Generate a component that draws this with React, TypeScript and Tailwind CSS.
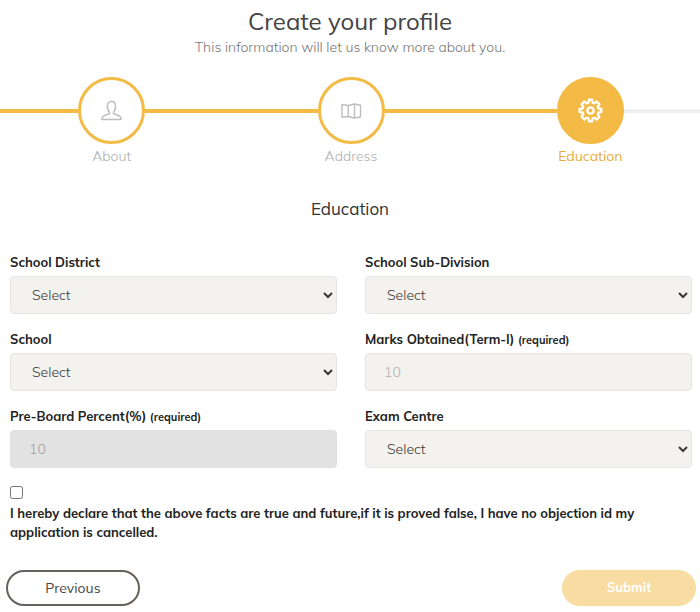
import React, { useState } from 'react';
import clsx from 'clsx';

type StepItem = {
    name: string;
    icon: React.ReactNode;
    active?: boolean;
    last?: boolean;
};

const UserIcon = () => (
    <svg width="21" height="21" viewBox="0 0 21 21" fill="none" stroke="currentColor" strokeWidth="1.5" strokeLinejoin="round">
        <path d="M8.5 12.2C7.2 11 6.4 9.2 6.4 6.6C6.4 3.2 7.8 1.2 10.5 1.2S14.6 3.2 14.6 6.6C14.6 9.2 13.8 11 12.5 12.2V13.6C14.6 14.7 20 15.2 20 18.2V19.5H1V18.2C1 15.2 6.4 14.7 8.5 13.6Z" />
    </svg>
);

const MapIcon = () => (
    <svg width="21" height="21" viewBox="0 0 21 21" fill="none" stroke="currentColor" strokeWidth="1.4" strokeLinejoin="round">
        <path d="M1 4.5L7.2 5.5L13.5 4L19.5 5.2V17L13.5 18L7.2 16.5L1 17.2Z" />
        <path d="M7.2 5.5V16.5M13.5 4V18" />
    </svg>
);

const SettingsIcon = () => (
    <svg width="25" height="25" viewBox="0 0 25 25" fill="none" stroke="currentColor" strokeWidth="2.3" strokeLinejoin="round">
        <path d="M10.9 1.6H14.1L14.5 4.6L16.3 5.3L18.7 3.5L21.5 6.3L19.7 8.7L20.4 10.5L23.4 10.9V14.1L20.4 14.5L19.7 16.3L21.5 18.7L18.7 21.5L16.3 19.7L14.5 20.4L14.1 23.4H10.9L10.5 20.4L8.7 19.7L6.3 21.5L3.5 18.7L5.3 16.3L4.6 14.5L1.6 14.1V10.9L4.6 10.5L5.3 8.7L3.5 6.3L6.3 3.5L8.7 5.3L10.5 4.6Z" />
        <circle cx="12.5" cy="12.5" r="3.2" />
    </svg>
);

const STEPS: StepItem[] = [
    { name: 'About', icon: <UserIcon /> },
    { name: 'Address', icon: <MapIcon /> },
    { name: 'Education', icon: <SettingsIcon />, active: true, last: true },
];

const Step: React.FC<StepItem> = ({ name, icon, active, last }) => (
    <li className="flex flex-col items-center">
        <div className="flex w-full items-center">
            <span className="h-1 flex-1 bg-[#f3bb45]" />
            <span
                className={clsx(
                    'flex size-[67px] items-center justify-center rounded-full border-3 border-[#f3bb45]',
                    active ? 'bg-[#f3bb45] text-white' : 'bg-white text-[#bdbdbd]'
                )}
            >
                {icon}
            </span>
            <span className={clsx('h-1 flex-1', last ? 'bg-[#f0f0f0]' : 'bg-[#f3bb45]')} />
        </div>
        <span className={clsx('leading-6', active ? 'text-sm text-[#e6ac3c]' : 'text-sm font-light text-[#b0b0b0]')}>{name}</span>
    </li>
);

const Label: React.FC<{ id: string; text: string; required?: boolean }> = ({ id, text, required }) => (
    <label htmlFor={id} className="h-6 text-[13px] leading-5 font-bold text-[#222222]">
        {text} {required && <small className="text-[11px]">(required)</small>}
    </label>
);

const SelectField: React.FC<{ id: string; label: string }> = ({ id, label }) => (
    <div className="flex flex-col">
        <Label id={id} text={label} />
        <select id={id} className="h-[38px] w-full rounded border border-[#e6e5e2] bg-[#f3f2ee] pl-[17px] text-sm font-light text-[#3a3835]">
            <option>Select</option>
        </select>
    </div>
);

const NumberField: React.FC<{ id: string; label: string; disabled?: boolean }> = ({ id, label, disabled }) => (
    <div className="flex flex-col">
        <Label id={id} text={label} required />
        <input
            id={id}
            type="text"
            placeholder="10"
            disabled={disabled}
            className="h-[38px] w-full rounded border border-[#e6e5e2] bg-[#f3f2ee] px-[18px] text-sm font-light placeholder:text-[#b0b0b0] disabled:border-[#e0e0e0] disabled:bg-[#e2e2e2] disabled:placeholder:text-[#a0a0a0]"
        />
    </div>
);

export default function App() {
    const [agreed, setAgreed] = useState(false);

    return (
        <main className="overflow-hidden bg-white font-['Muli','Mulish','Lato',sans-serif]">
            {/* Header */}
            <header className="pt-[3px] text-center">
                <h1 className="text-2xl leading-9 text-[#444444]">Create your profile</h1>
                <p className="text-sm leading-4 font-light text-[#777777]">This information will let us know more about you.</p>
            </header>

            {/* Wizard steps */}
            <ol className="-mr-2.5 -ml-2 grid grid-cols-3 pt-[22px]">
                {STEPS.map(step => (
                    <Step key={step.name} {...step} />
                ))}
            </ol>

            <form onSubmit={e => e.preventDefault()}>
                <h2 className="pt-[27px] text-center text-[17px] leading-7 text-[#333333]">Education</h2>

                <div className="grid grid-cols-2 gap-x-7 gap-y-[15px] pt-[29px] pr-2 pl-2.5">
                    <SelectField id="district" label="School District" />
                    <SelectField id="subdivision" label="School Sub-Division" />
                    <SelectField id="school" label="School" />
                    <NumberField id="marks" label="Marks Obtained(Term-I)" />
                    <NumberField id="preboard" label="Pre-Board Percent(%)" disabled />
                    <SelectField id="centre" label="Exam Centre" />
                </div>

                {/* Declaration */}
                <div className="flex flex-col gap-[5px] pt-[18px] pr-2 pl-2.5">
                    <input
                        id="declare"
                        type="checkbox"
                        checked={agreed}
                        onChange={e => setAgreed(e.target.checked)}
                        className="size-[13px]"
                    />
                    <label htmlFor="declare" className="pr-10 text-[13px] leading-[19px] font-bold text-[#222222]">
                        I hereby declare that the above facts are true and future,if it is proved false, I have no objection id my
                        application is cancelled.
                    </label>
                </div>

                {/* Footer buttons */}
                <div className="flex justify-between pt-7 pr-1 pb-1.5 pl-1.5">
                    <button type="button" className="h-9 w-[134px] rounded-full border-2 border-[#66615b] text-sm text-[#444444]">
                        Previous
                    </button>
                    <button type="submit" disabled={!agreed} className="h-9 w-[134px] rounded-full bg-[#f3bb45] text-[13px] font-bold text-white disabled:opacity-50">
                        Submit
                    </button>
                </div>
            </form>
        </main>
    );
}
